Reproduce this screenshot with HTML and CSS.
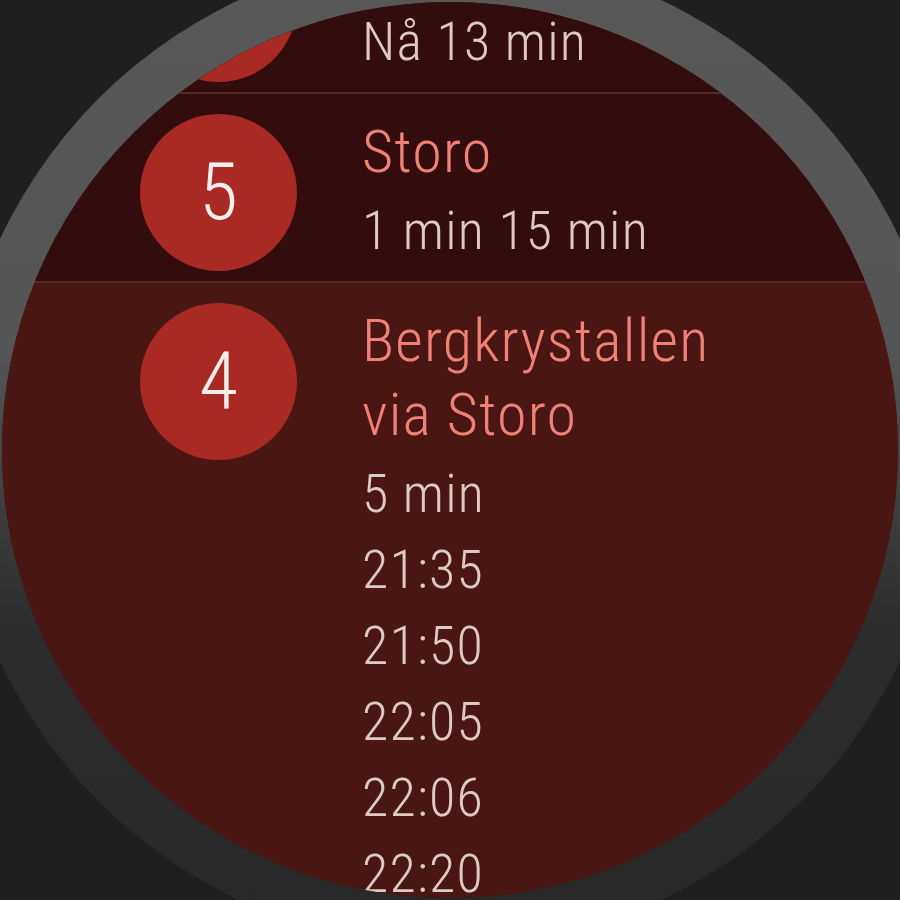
FILE: index.html
```html
<!DOCTYPE html>
<html lang="nb">

<head>
  <meta charset="UTF-8">
  <meta name="viewport" content="width=device-width, initial-scale=1.0">
  <title>Avganger</title>
  <link rel="stylesheet" href="styles.css">
</head>

<body>
  <div class="bezel">
    <div class="screen">
      <!-- list is scrolled, first row partly above the top -->
      <div class="departures">
        <div class="row">
          <div class="line_badge">3</div>
          <div class="info">
            <p class="dest">Mortensrud</p>
            <p class="times">Nå 13 min</p>
          </div>
        </div>

        <div class="row">
          <div class="line_badge">5</div>
          <div class="info">
            <p class="dest">Storo</p>
            <p class="times">1 min 15 min</p>
          </div>
        </div>

        <div class="row open">
          <div class="line_badge">4</div>
          <div class="info">
            <p class="dest">Bergkrystallen<br>via Storo</p>
            <p class="times">5 min</p>
            <p class="times">21:35</p>
            <p class="times">21:50</p>
            <p class="times">22:05</p>
            <p class="times">22:06</p>
            <p class="times">22:20</p>
          </div>
        </div>
      </div>
    </div>
  </div>
</body>

</html>
```

FILE: styles.css
```css
body {
  margin: 0;
  padding: 0;
  width: 900px;
  height: 900px;
  overflow: hidden;
  background-color: #1f1f1f;
  display: flex;
  justify-content: center;
  align-items: center;
  font-family: Roboto, "Liberation Sans", sans-serif;
  font-weight: 300;
  font-stretch: 75%;
}

.bezel {
  flex: none;
  width: 896px;
  height: 896px;
  padding: 49px;
  border-radius: 50%;
  background: linear-gradient(to bottom, #585858 0%, #555 40%, #2c2c2c 68%, #282828 100%);
}

.screen {
  width: 896px;
  height: 896px;
  border-radius: 50%;
  overflow: hidden;
  background-color: #4a1613;
}

.departures {
  margin-top: -97px;
}

.row {
  display: flex;
  align-items: flex-start;
  height: 167px;
  padding: 20px 0 0 138px;
  background-color: #330d0d;
  border-bottom: 2px solid #572826;
}

.row.open {
  height: auto;
  background-color: #4a1613;
  border-bottom: none;
}

.line_badge {
  flex: none;
  width: 157px;
  height: 157px;
  border-radius: 50%;
  background-color: #a82a22;
  color: #f6eeee;
  font-size: 80px;
  line-height: 157px;
  text-align: center;
}

.info {
  margin-left: 65px;
  padding-top: 1px;
}

.info p {
  margin: 0;
}

.dest {
  color: #ef8275;
  font-size: 60px;
  line-height: 74px;
  letter-spacing: 1.2px;
  margin-bottom: 4px !important;
}

.times {
  color: #dccac6;
  font-size: 54px;
  line-height: 76px;
  letter-spacing: 1.2px;
}
```
